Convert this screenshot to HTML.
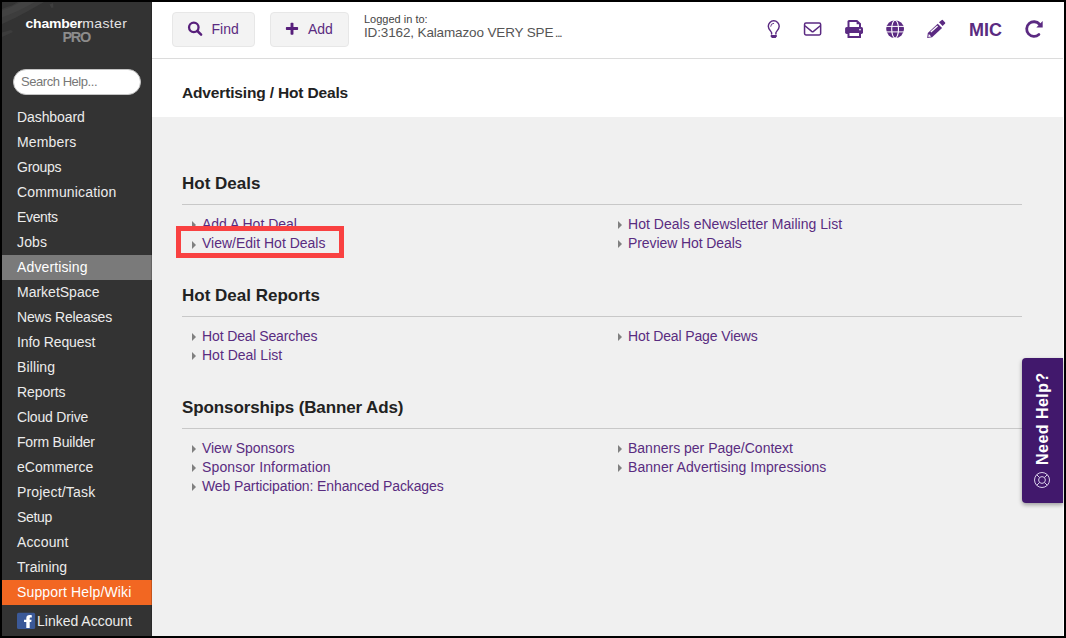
<!DOCTYPE html>
<html><head><meta charset="utf-8">
<style>
*{box-sizing:border-box;margin:0;padding:0}
html,body{width:1066px;height:638px;overflow:hidden;background:#000}
body{font-family:"Liberation Sans",sans-serif;position:relative}
#app{position:absolute;left:2px;top:2px;width:1062px;height:634px;background:#fff;overflow:hidden}
#side{position:absolute;left:0;top:0;width:150px;height:634px;background:#333}
#main{position:absolute;left:150px;top:0;width:911px;height:634px;background:#fff}
#hdr{position:absolute;left:0;top:0;width:911px;height:56px;background:#fff;border-bottom:0}
#hline{position:absolute;left:0;top:56px;width:911px;height:1px;background:#dcdcdc}
#gray{position:absolute;left:0;top:115px;width:911px;height:519px;background:#f0f0f0}
.t{position:absolute;white-space:nowrap;line-height:1}
.btn{position:absolute;top:10px;height:35px;background:#f3f3f3;border:1px solid #e7e7e7;border-radius:4px}
.nav{position:absolute;left:0;width:150px;height:25px;color:#ececec;font-size:14px;line-height:25px;padding-left:15px;white-space:nowrap}
.h2{position:absolute;left:30px;font-weight:bold;font-size:17px;color:#222;white-space:nowrap;line-height:1}
.hr{position:absolute;left:30px;width:840px;height:1px;background:#c8c8c8}
.lk{margin-top:0px;position:absolute;font-size:14px;color:#592c80;white-space:nowrap;line-height:1}
.ar{margin-top:.7px;position:absolute;width:0;height:0;border-left:4px solid #808080;border-top:4px solid transparent;border-bottom:4px solid transparent}
</style></head><body>
<div id="app">
<div id="side">
  <svg style="position:absolute;left:0;top:0" width="150" height="60" viewBox="0 0 150 60"><polygon points="0,7 5,5 10,3.5 16,0 42,0 26,9 13,16 0,22" fill="#3d3d3d"/><polygon points="0,8.5 8,5.5 13,3 19,0 33,0 22,6 11,11 0,15.5" fill="#434343"/><polygon points="0,30.5 9,28 11,30 0,35" fill="#3c3c3c"/><polygon points="47.5,2.5 51,1 51.5,5.5 49.5,6" fill="#3f3f3f"/></svg>
  <div class="t" id="lg1" style="left:23.5px;top:14px;font-size:14px;color:#fff;transform:scaleY(0.95);transform-origin:0 12px"><b style="letter-spacing:-0.23px">chamber</b><span style="color:#e4e4e4;letter-spacing:0.38px">master</span></div>
  <div class="t" id="lg2" style="left:60.5px;top:28px;font-size:14.5px;letter-spacing:-1.3px;font-weight:bold;color:#8c8c8c">PRO</div>
  <div style="position:absolute;left:10.6px;top:67.4px;width:128.9px;height:25.3px;border-radius:13px;background:#fff;border:1px solid #c4c4c4"></div>
  <div class="t" id="sh" style="left:19px;top:73px;font-size:13px;letter-spacing:-0.45px;color:#777">Search Help...</div>
  <div class="nav" style="top:103px"><span id="n0" style="letter-spacing:-0.088px">Dashboard</span></div>
  <div class="nav" style="top:128px"><span id="n1" style="letter-spacing:0.167px">Members</span></div>
  <div class="nav" style="top:153px"><span id="n2" style="letter-spacing:-0.26px">Groups</span></div>
  <div class="nav" style="top:178px"><span id="n3" style="letter-spacing:0.167px">Communication</span></div>
  <div class="nav" style="top:203px"><span id="n4" style="letter-spacing:-0.34px">Events</span></div>
  <div class="nav" style="top:228px"><span id="n5" style="letter-spacing:0.133px">Jobs</span></div>
  <div class="nav" style="top:253px;background:#7a7a7a;color:#fff"><span id="n6" style="letter-spacing:0.13px">Advertising</span></div>
  <div class="nav" style="top:278px"><span id="n7" style="letter-spacing:0.0px">MarketSpace</span></div>
  <div class="nav" style="top:303px"><span id="n8" style="letter-spacing:-0.175px">News Releases</span></div>
  <div class="nav" style="top:328px"><span id="n9" style="letter-spacing:-0.1px">Info Request</span></div>
  <div class="nav" style="top:353px"><span id="n10" style="letter-spacing:0.117px">Billing</span></div>
  <div class="nav" style="top:378px"><span id="n11" style="letter-spacing:-0.083px">Reports</span></div>
  <div class="nav" style="top:403px"><span id="n12" style="letter-spacing:-0.19px">Cloud Drive</span></div>
  <div class="nav" style="top:428px"><span id="n13" style="letter-spacing:-0.191px">Form Builder</span></div>
  <div class="nav" style="top:453px"><span id="n14" style="letter-spacing:0.012px">eCommerce</span></div>
  <div class="nav" style="top:478px"><span id="n15" style="letter-spacing:0.173px">Project/Task</span></div>
  <div class="nav" style="top:503px"><span id="n16" style="letter-spacing:-0.325px">Setup</span></div>
  <div class="nav" style="top:528px"><span id="n17" style="letter-spacing:0.133px">Account</span></div>
  <div class="nav" style="top:553px"><span id="n18" style="letter-spacing:0.0px">Training</span></div>
  <div class="nav" style="top:578px;background:#f26722;color:#fff"><span id="n19" style="letter-spacing:0.144px">Support Help/Wiki</span></div>
  <svg style="position:absolute;left:14px;top:609px" width="22" height="20" viewBox="14 609 22 20"><rect x="15" y="610.8" width="18.15" height="16.2" rx="1.6" fill="#3b5998"/><path d="M24.3 626.1V620H22V617.8H24.3V616.3C24.3 614.2 25.6 613.1 27.6 613.1C28.5 613.1 29.3 613.2 29.8 613.3V615.4H28.6C27.9 615.4 27.7 615.8 27.7 616.4V617.8H29.6L29.2 620H27.7V626.1Z" fill="#fff"/></svg>
  <div style="position:absolute;left:149px;top:0;width:1px;height:634px;background:rgba(0,0,0,.18)"></div>
  <div class="t" id="la" style="left:35px;top:612px;font-size:14px;color:#ececec">Linked Account</div>
</div>
<div id="main">
  <div id="hdr">
    <div class="btn" style="left:20px;width:83px"></div>
    <div class="btn" style="left:118px;width:79px"></div>
    
    <svg id="ic_search" style="position:absolute;left:30px;top:14px" width="24" height="24" viewBox="30 14 24 24"><circle cx="41.8" cy="25.35" r="4.75" fill="none" stroke="#571f7b" stroke-width="2.3"/><path d="M45.4 29L49.1 32.7" stroke="#571f7b" stroke-width="2.5" stroke-linecap="round"/></svg>
    <svg id="ic_plus" style="position:absolute;left:130px;top:16px" width="20" height="20" viewBox="130 16 20 20"><rect x="133.9" y="25.1" width="12.2" height="2.9" rx=".7" fill="#571f7b"/><rect x="138.55" y="20.7" width="2.9" height="12.1" rx=".7" fill="#571f7b"/></svg>
    <div class="t" id="tf" style="left:59.5px;top:20px;font-size:14px;color:#5a2b81">Find</div>
    <div class="t" id="ta" style="left:156px;top:20px;font-size:14px;color:#5a2b81">Add</div>
    
    <svg id="ic_hdr" style="position:absolute;left:600px;top:10px" width="311" height="36" viewBox="600 10 311 36">
      <!-- lightbulb -->
      <path d="M619.6 31.9V30.8C619.6 29.3 616.3 27.7 616.3 24.3A5.45 5.45 0 0 1 627.2 24.3C627.2 27.7 623.9 29.3 623.9 30.8V31.9" fill="none" stroke="#5b2a82" stroke-width="1.45" stroke-linecap="round"/>
      <path d="M618.7 24.3A3 3 0 0 1 621.7 21.3" fill="none" stroke="#5b2a82" stroke-width="0.9" stroke-linecap="round"/>
      <path d="M618.7 33H624.8V34.3L623.7 36H619.8L618.7 34.3Z" fill="#5b2a82"/>
      <!-- envelope -->
      <rect x="652.55" y="21.05" width="16.1" height="11.9" rx="1.4" fill="none" stroke="#5b2a82" stroke-width="1.5"/>
      <path d="M652.9 23.7L659.7 29.4Q660.6 30.1 661.5 29.4L668.3 23.7" fill="none" stroke="#5b2a82" stroke-width="1.5" stroke-linejoin="round"/>
      <!-- print -->
      <path d="M695.5 26V19.4A1.5 1.5 0 0 1 697 17.9H705.2L709 21.6V26Z" fill="#5b2a82"/>
      <path d="M697.5 25.3V19.9H704.6V22.3H707V25.3Z" fill="#fff"/>
      <rect x="693.1" y="24.9" width="17.9" height="7" rx="1.6" fill="#5b2a82"/>
      <rect x="695.5" y="29.4" width="13.5" height="6.6" rx=".6" fill="#5b2a82"/>
      <rect x="697.5" y="31" width="9.5" height="3" fill="#fff"/>
      <circle cx="708" cy="27.6" r=".85" fill="#fff"/>
      <!-- globe -->
      <circle cx="743.1" cy="27.1" r="8.9" fill="#5b2a82"/>
      <ellipse cx="743.1" cy="27.1" rx="3.4" ry="8.9" fill="none" stroke="#fff" stroke-width="1.1"/>
      <path d="M734 24.4H752.2M734 29.9H752.2" stroke="#fff" stroke-width="1"/>
      <!-- pencil -->
      <path d="M787 20.2L789.8 17.9Q790.3 17.6 790.8 18L793.1 20.4Q793.5 20.9 793.1 21.4L790.6 24.1Z" fill="#5b2a82"/>
      <path d="M785.7 21.7L790.1 25.9L780.1 35.3L775.2 36.1L775.8 31Z" fill="#5b2a82"/>
      <path d="M776.8 32L779.2 34.4L776.3 35Z" fill="#fff"/>
      <path d="M778.8 30.1L785.6 24.1" stroke="#fff" stroke-width="1.3"/>
      <!-- refresh -->
      <path d="M887.5 22.26A7.3 7.3 0 1 0 886.88 32.47" fill="none" stroke="#5b2a82" stroke-width="2.8" stroke-linecap="round"/>
      <path d="M890.7 19V25.6H884.3Z" fill="#5b2a82"/>
    </svg>
    <div class="t" id="li1" style="left:212px;top:12px;font-size:11px;color:#444">Logged in to:</div>
    <div class="t" id="li2" style="left:212px;top:24px;font-size:13.5px;letter-spacing:-0.14px;color:#555"><span id="li2a">ID:3162, Kalamazoo VERY SPE</span><span id="li2b" style="letter-spacing:-1.7px;margin-left:1.5px">...</span></div>
    <div class="t" id="mic" style="left:817px;top:19px;font-size:18px;font-weight:bold;color:#5a2b81">MIC</div>
  </div>
  <div id="hline"></div>
  <div class="t" id="ttl" style="left:30px;top:83.3px;letter-spacing:-0.16px;font-size:15.5px;font-weight:bold;color:#222">Advertising / Hot Deals</div>
  <div id="gray">
    <div class="h2" id="h1" style="top:58px">Hot Deals</div>
    <div class="hr" style="top:87px"></div>
    <div class="ar" style="left:40px;top:103px"></div><div class="lk" id="l1" style="left:50px;top:100px">Add A Hot Deal</div>
    <div class="ar" style="left:466px;top:103px"></div><div class="lk" id="l3" style="left:476px;top:100px;letter-spacing:0.03px">Hot Deals eNewsletter Mailing List</div>
    <div class="ar" style="left:466px;top:122px"></div><div class="lk" id="l4" style="left:476px;top:119px;letter-spacing:-0.09px">Preview Hot Deals</div>
    <div id="red" style="position:absolute;left:24px;top:109px;width:168px;height:32px;border:5px solid #f94141;background:#f0f0f0"></div>
    <div class="ar" style="left:40px;top:123.2px"></div><div class="lk" id="l2" style="left:50px;top:119px">View/Edit Hot Deals</div>

    <div class="h2" id="h2" style="top:170px">Hot Deal Reports</div>
    <div class="hr" style="top:199px"></div>
    <div class="ar" style="left:40px;top:215px"></div><div class="lk" id="l5" style="left:50px;top:212px;letter-spacing:-0.125px">Hot Deal Searches</div>
    <div class="ar" style="left:40px;top:234px"></div><div class="lk" id="l6" style="left:50px;top:231px">Hot Deal List</div>
    <div class="ar" style="left:466px;top:215px"></div><div class="lk" id="l7" style="left:476px;top:212px;letter-spacing:-0.125px">Hot Deal Page Views</div>

    <div class="h2" id="h3" style="top:282px;letter-spacing:-0.11px">Sponsorships (Banner Ads)</div>
    <div class="hr" style="top:311px"></div>
    <div class="ar" style="left:40px;top:327px"></div><div class="lk" id="l8" style="left:50px;top:324px;letter-spacing:-0.05px">View Sponsors</div>
    <div class="ar" style="left:40px;top:346px"></div><div class="lk" id="l9" style="left:50px;top:343px;letter-spacing:0.14px">Sponsor Information</div>
    <div class="ar" style="left:40px;top:365px"></div><div class="lk" id="l10" style="left:50px;top:362px;letter-spacing:-0.114px">Web Participation: Enhanced Packages</div>
    <div class="ar" style="left:466px;top:327px"></div><div class="lk" id="l11" style="left:476px;top:324px">Banners per Page/Context</div>
    <div class="ar" style="left:466px;top:346px"></div><div class="lk" id="l12" style="left:476px;top:343px;letter-spacing:0.05px">Banner Advertising Impressions</div>

    <div id="help" style="position:absolute;left:870px;top:241px;width:41px;height:145px;background:#41186c;border-radius:4px 0 0 4px;box-shadow:0 2px 4px rgba(0,0,0,.35)">
      <div id="nh" style="position:absolute;left:21px;top:106.5px;letter-spacing:0.47px;transform-origin:0 0;transform:rotate(-90deg) translate(0,-50%);font-weight:bold;font-size:16px;color:#fff;white-space:nowrap;line-height:1">Need Help?</div>
      <svg style="position:absolute;left:11px;top:113px" width="18" height="18" viewBox="0 0 18 18"><circle cx="9" cy="9" r="7.5" fill="none" stroke="#d9d0ea" stroke-width="1"/><circle cx="9" cy="9" r="3.4" fill="none" stroke="#d9d0ea" stroke-width="1"/><path d="M3.7 3.7L6.4 6.4M14.3 3.7L11.6 6.4M3.7 14.3L6.4 11.6M14.3 14.3L11.6 11.6" stroke="#d9d0ea" stroke-width="1"/></svg>
    </div>
  </div>
</div>
</div>
</body></html>
